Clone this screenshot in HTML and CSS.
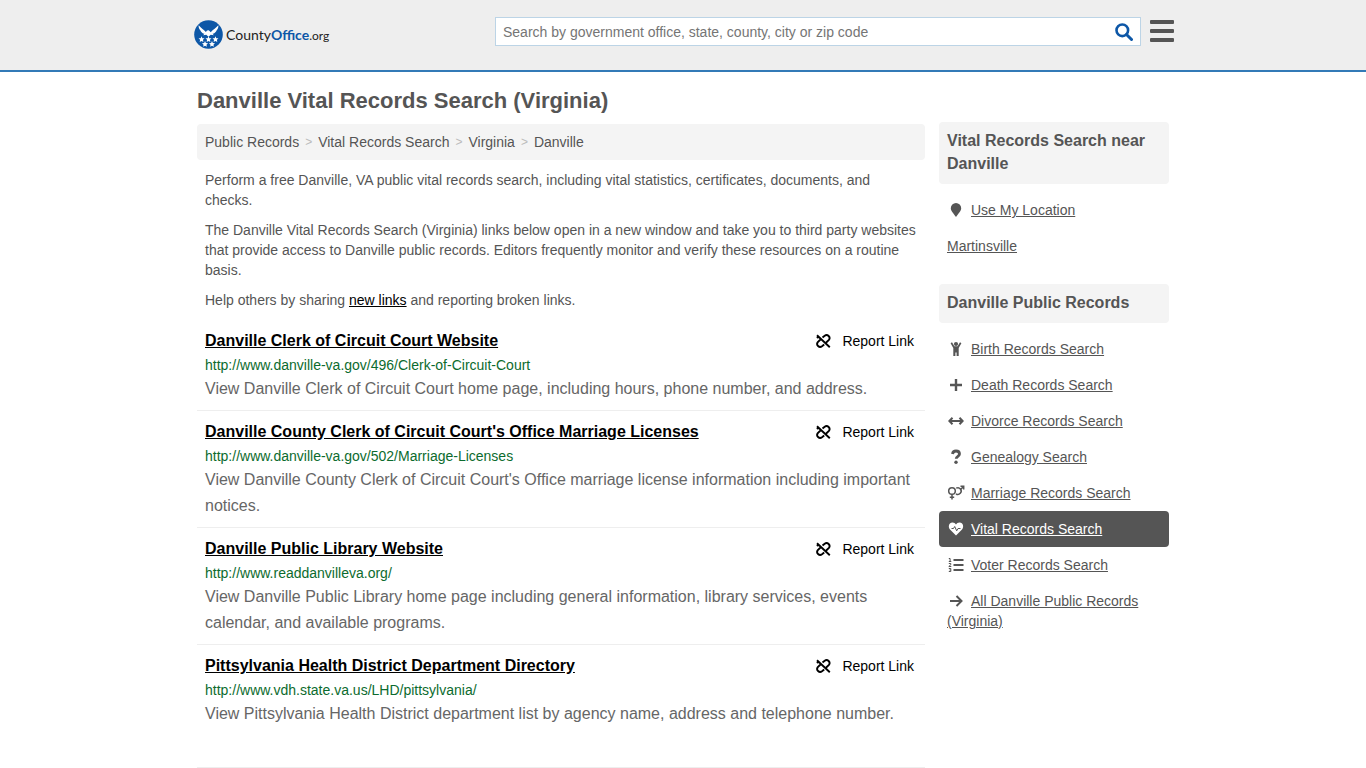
FILE: index.html
```html
<!DOCTYPE html>
<html lang="en">
<head>
<meta charset="UTF-8">
<meta name="viewport" content="width=device-width, initial-scale=1.0">
<title>Danville Vital Records Search (Virginia)</title>
<link rel="stylesheet" href="styles.css">
</head>
<body>

<!-- Shared icons -->
<svg class="sprite" aria-hidden="true">
  <symbol id="unlink" viewBox="0 0 16 16">
    <path d="M7.500 4.500 9.700 2.700a3 3 0 0 1 4.200 4.200L11.200 9.500M9.200 11.500 7 13.300a3 3 0 0 1-4.200-4.200L5.500 6.500M2 2.200 14.800 14.200M2.200 5.200 3.200 3.400" fill="none" stroke="currentColor" stroke-width="1.900"/>
  </symbol>
</svg>

<header class="header">
  <div class="header-inner">
    <a class="logo" href="#">
      <svg class="logo-mark" viewBox="0 0 30 30" aria-hidden="true">
        <circle cx="15" cy="15" r="14.800" fill="#0d57a7"/>
        <path d="M4.800 5.500C7 8.500 10 9.500 12.300 12.500l1.200-1.700 1.700-.2.900.8 1.200 1.300C19.800 9.500 23 8.500 25.200 5.500c.2 2.200-.5 3.800-1.700 5-.8 2-2.200 3.200-4.300 3.800l1.300 1.400-3.200-.4L15 17.300l-2.300-2-3.200.4 1.300-1.400c-2.100-.6-3.500-1.800-4.300-3.800-1.200-1.200-1.900-2.800-1.700-5z" fill="#fff"/>
        <g fill="#fff">
          <path id="star" d="M7.800 16.800l.9 2 2.200.2-1.600 1.500.4 2.200-1.900-1.100-1.900 1.100.4-2.200L4.700 19l2.200-.2z"/>
          <use href="#star" x="7.200"/>
          <use href="#star" x="14.400"/>
          <use href="#star" x="3.600" y="5"/>
          <use href="#star" x="10.800" y="5"/>
        </g>
      </svg>
      <span class="logo-text">County<b>Office</b><small>.org</small></span>
    </a>
    <form class="search">
      <input class="search-input" type="text" aria-label="Search" placeholder="Search by government office, state, county, city or zip code">
      <button class="search-button" type="button" aria-label="Search">
        <svg viewBox="0 0 18 18"><circle cx="7.300" cy="7.300" r="5.800" fill="none" stroke="#0d57a7" stroke-width="2.600"/><path d="M11.500 11.500l5 5" stroke="#0d57a7" stroke-width="3" stroke-linecap="round"/></svg>
      </button>
    </form>
    <button class="menu-button" type="button" aria-label="Menu"><span></span><span></span><span></span></button>
  </div>
</header>

<div class="container">
  <main class="main">
    <h1>Danville Vital Records Search (Virginia)</h1>
    <nav class="breadcrumb">
      <a href="#">Public Records</a><i>&gt;</i><a href="#">Vital Records Search</a><i>&gt;</i><a href="#">Virginia</a><i>&gt;</i><a href="#">Danville</a>
    </nav>
    <div class="intro">
      <p>Perform a free Danville, VA public vital records search, including vital statistics, certificates, documents, and checks.</p>
      <p>The Danville Vital Records Search (Virginia) links below open in a new window and take you to third party websites that provide access to Danville public records. Editors frequently monitor and verify these resources on a routine basis.</p>
      <p>Help others by sharing <a href="#">new links</a> and reporting broken links.</p>
    </div>

    <ul class="results">
      <li class="result">
        <div class="result-head">
          <a class="result-title" href="#">Danville Clerk of Circuit Court Website</a>
          <a class="report" href="#"><svg aria-hidden="true"><use href="#unlink"/></svg>Report Link</a>
        </div>
        <div class="result-url">http://www.danville-va.gov/496/Clerk-of-Circuit-Court</div>
        <div class="result-text">View Danville Clerk of Circuit Court home page, including hours, phone number, and address.</div>
      </li>
      <li class="result">
        <div class="result-head">
          <a class="result-title" href="#">Danville County Clerk of Circuit Court's Office Marriage Licenses</a>
          <a class="report" href="#"><svg aria-hidden="true"><use href="#unlink"/></svg>Report Link</a>
        </div>
        <div class="result-url">http://www.danville-va.gov/502/Marriage-Licenses</div>
        <div class="result-text">View Danville County Clerk of Circuit Court's Office marriage license information including important notices.</div>
      </li>
      <li class="result">
        <div class="result-head">
          <a class="result-title" href="#">Danville Public Library Website</a>
          <a class="report" href="#"><svg aria-hidden="true"><use href="#unlink"/></svg>Report Link</a>
        </div>
        <div class="result-url">http://www.readdanvilleva.org/</div>
        <div class="result-text">View Danville Public Library home page including general information, library services, events calendar, and available programs.</div>
      </li>
      <li class="result">
        <div class="result-head">
          <a class="result-title" href="#">Pittsylvania Health District Department Directory</a>
          <a class="report" href="#"><svg aria-hidden="true"><use href="#unlink"/></svg>Report Link</a>
        </div>
        <div class="result-url">http://www.vdh.state.va.us/LHD/pittsylvania/</div>
        <div class="result-text">View Pittsylvania Health District department list by agency name, address and telephone number.</div>
      </li>
    </ul>
  </main>

  <aside class="sidebar">
    <h2>Vital Records Search near Danville</h2>
    <ul class="side-list">
      <li><svg viewBox="0 0 18 16" aria-hidden="true"><path d="M9 1a5.200 5.200 0 0 1 5.200 5.200c0 2.800-2.700 5-5.200 8.800-2.500-3.800-5.200-6-5.200-8.800A5.200 5.200 0 0 1 9 1z"/></svg><a href="#">Use My Location</a></li>
      <li><a href="#">Martinsville</a></li>
    </ul>

    <h2>Danville Public Records</h2>
    <ul class="side-list">
      <li><svg viewBox="0 0 18 16" aria-hidden="true"><circle cx="9" cy="3" r="2.100"/><path d="M3.600 2.200 5 1.200 7.400 5.300h3.200L13 1.200l1.400 1-2.700 4.700V15H9.600v-3.500H8.400V15H6.300V6.900z"/></svg><a href="#">Birth Records Search</a></li>
      <li><svg viewBox="0 0 18 16" aria-hidden="true"><path d="M7.800 2h2.400v4.800H15v2.400h-4.800V14H7.800V9.200H3V6.800h4.800z"/></svg><a href="#">Death Records Search</a></li>
      <li><svg viewBox="0 0 18 16" aria-hidden="true"><path d="M5.500 4.800 2.400 8l3.100 3.200M12.500 4.800 15.600 8l-3.100 3.200M2.800 8h12.400" class="line"/></svg><a href="#">Divorce Records Search</a></li>
      <li><svg viewBox="0 0 18 16" aria-hidden="true"><path d="M5.500 5c.3-2 1.700-3 3.500-3 2.200 0 3.500 1.200 3.500 3 0 2.400-3.300 2.200-3.300 4.700" fill="none" stroke="currentColor" stroke-width="2.800"/><circle cx="9" cy="13.200" r="1.700"/></svg><a href="#">Genealogy Search</a></li>
      <li><svg viewBox="0 0 18 16" aria-hidden="true"><g class="thin"><circle cx="5" cy="6" r="3.300"/><path d="M5 9.300v5.200M2.800 12.300h4.400M9.200 3.200a3.300 3.300 0 1 1-.2 5.600M13.800 4.200l2.700-2.700M13.500 1.300h3.200v3.200"/></g></svg><a href="#">Marriage Records Search</a></li>
      <li class="active"><svg viewBox="0 0 18 16" aria-hidden="true"><path d="M9 14.500 3 8.500C.7 6 2 1.800 5.300 1.600 7 1.500 8.200 2.400 9 3.600c.8-1.200 2-2.100 3.700-2C16 1.800 17.300 6 15 8.500z"/><path d="M4.500 7.500h2l1.200-2 2 4.300 1.300-2.300h2.500" fill="none" stroke="#555" stroke-width="1"/></svg><a href="#">Vital Records Search</a></li>
      <li><svg viewBox="0 0 18 16" aria-hidden="true"><path d="M6.500 3h10M6.500 8h10M6.500 13h10" class="line"/><path d="M1.800 1.500h1.300v3M1.800 4.500h2.500M1.800 6.500h2v1.200l-2 1.800h2.500M1.800 11.500h2v3h-2M2.500 13h1.200" fill="none" stroke="currentColor"/></svg><a href="#">Voter Records Search</a></li>
      <li><svg viewBox="0 0 18 16" aria-hidden="true"><path d="M3 8h11.500M9.500 3l5 5-5 5" class="line"/></svg><a href="#">All Danville Public Records (Virginia)</a></li>
    </ul>
  </aside>
</div>

</body>
</html>
```
FILE: styles.css
```css
* {
  box-sizing: border-box;
}
body {
  margin: 0;
  font-family: "Liberation Sans", Arial, sans-serif;
  font-size: 14px;
  line-height: 20px;
  color: #555;
  background-color: #fff;
}
a {
  color: inherit;
}
ul {
  list-style: none;
  margin: 0;
  padding: 0;
}
.sprite {
  position: absolute;
  width: 0;
  height: 0;
}

/* Header */
.header {
  background-color: #eee;
  border-bottom: 2px solid #337ab7;
}
.header-inner {
  display: flex;
  align-items: flex-start;
  max-width: 982px;
  height: 70px;
  margin: 0 auto;
  padding-top: 17px;
}
.logo {
  display: flex;
  align-items: center;
  gap: 3px;
  width: 303px;
  padding: 3px 0 0 2px;
  text-decoration: none;
  color: #222;
}
.logo-mark {
  width: 29px;
  height: 29px;
}
.logo-text {
  padding-top: 2px;
  font-family: Lato, sans-serif;
  font-size: 14px;
}
.logo-text b {
  color: #0d57a7;
}
.logo-text small {
  font-size: 12px;
}
.search {
  display: flex;
  flex: 1;
  height: 29px;
  background-color: #fff;
  border: 1px solid #bcd4e6;
}
.search-input {
  flex: 1;
  min-width: 0;
  padding: 0 7px;
  border: 0;
  background: none;
  font: inherit;
}
.search-input::placeholder {
  color: #757575;
  opacity: 1;
}
.search-button {
  width: 32px;
  padding: 0;
  border: 0;
  background: none;
  cursor: pointer;
}
.search-button svg {
  display: block;
  width: 18px;
  height: 18px;
  margin-left: 7px;
}
.menu-button {
  display: flex;
  flex-direction: column;
  gap: 5px;
  width: 24px;
  margin: 3px 0 0 9px;
  padding: 0;
  border: 0;
  background: none;
  cursor: pointer;
}
.menu-button span {
  width: 100%;
  height: 4px;
  border-radius: 1px;
  background-color: #555;
}

/* Layout */
.container {
  display: flex;
  gap: 14px;
  max-width: 972px;
  margin: 0 auto;
}
.main {
  flex: 1;
}
.sidebar {
  width: 230px;
  padding-top: 50px;
}

h1 {
  margin: 13px 0 7px;
  font-size: 22px;
  line-height: 32px;
}
.breadcrumb {
  display: flex;
  padding: 8px;
  border-radius: 4px;
  background-color: #f4f4f4;
}
.breadcrumb a {
  text-decoration: none;
}
.breadcrumb i {
  padding: 0 6px;
  font-size: 12px;
  font-style: normal;
  color: #bbb;
}
.intro {
  padding: 0 8px;
}
.intro p {
  margin: 10px 0;
}
.intro a {
  color: #000;
}

/* Results */
.result {
  padding: 8px;
  border-bottom: 1px solid #eee;
}
.result:last-child {
  padding-bottom: 40px;
}
.result-head {
  display: flex;
  justify-content: space-between;
  padding-right: 3px;
  line-height: 26px;
  color: #000;
}
.result-title {
  font-size: 16px;
  font-weight: bold;
}
.report {
  display: flex;
  align-items: center;
  gap: 11px;
  text-decoration: none;
}
.report svg {
  width: 16px;
  height: 16px;
}
.result-url {
  line-height: 22px;
  color: #0c6b2e;
}
.result-text {
  font-size: 16px;
  line-height: 26px;
  color: #666;
}

/* Sidebar */
.sidebar h2 {
  margin: 0 0 8px;
  padding: 7px 8px 9px;
  border-radius: 4px;
  background-color: #f4f4f4;
  font-size: 16px;
  line-height: 23px;
}
.side-list {
  margin-bottom: 20px;
}
.side-list li {
  padding: 8px;
  border-radius: 4px;
}
.side-list svg {
  width: 18px;
  height: 16px;
  margin-right: 6px;
  vertical-align: -3px;
  fill: currentColor;
}
.side-list .line {
  fill: none;
  stroke: currentColor;
  stroke-width: 2;
}
.side-list .thin {
  fill: none;
  stroke: currentColor;
  stroke-width: 1.5;
}
.side-list .active {
  background-color: #555;
  color: #fff;
}
```
